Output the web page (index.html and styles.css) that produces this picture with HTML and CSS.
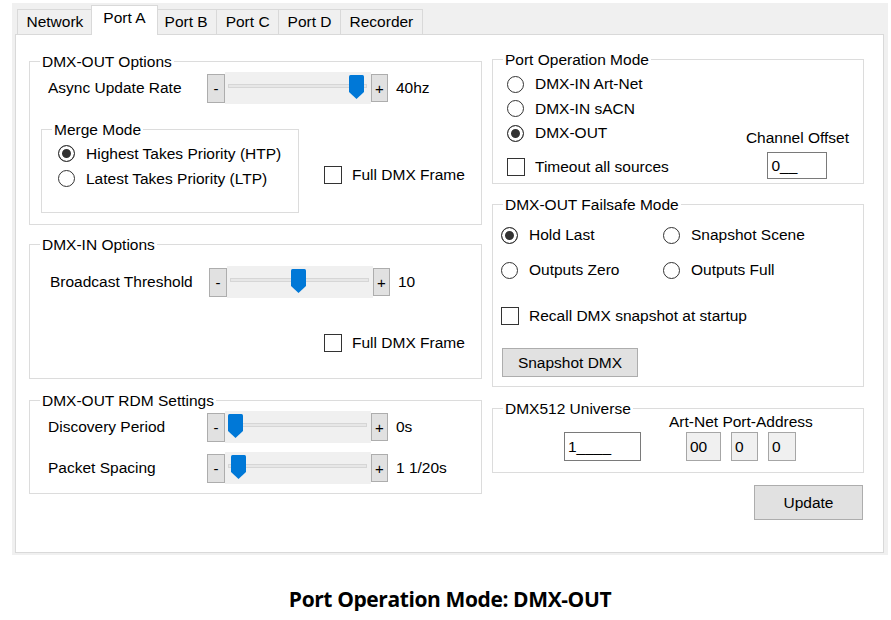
FILE: index.html
```html
<!DOCTYPE html>
<html>
<head>
<meta charset="utf-8">
<title>Port A</title>
<link rel="stylesheet" href="styles.css">
</head>
<body>
<div class="window">
  <div class="tabs">
    <div class="tab">Network</div>
    <div class="tab active">Port A</div>
    <div class="tab">Port B</div>
    <div class="tab">Port C</div>
    <div class="tab">Port D</div>
    <div class="tab">Recorder</div>
  </div>
  <div class="page">
    <div class="col col-left">
      <fieldset class="group g-out">
        <legend>DMX-OUT Options</legend>
        <div class="srow r-async">
          <span class="slabel">Async Update Rate</span>
          <div class="slider">
            <span class="sbtn minus">-</span>
            <div class="track"><div class="groove"></div><svg class="thumb" style="left:124px" viewBox="0 0 15 24" width="15" height="24"><path d="M1.5 0H13.5Q15 0 15 1.5V17L7.5 24L0 17V1.5Q0 0 1.5 0Z"/></svg></div>
            <span class="sbtn plus">+</span>
          </div>
          <span class="sval">40hz</span>
        </div>
        <div class="merge-row">
          <fieldset class="group g-merge">
            <legend>Merge Mode</legend>
            <div class="merge-list">
              <label class="opt"><span class="radio on"></span>Highest Takes Priority (HTP)</label>
              <label class="opt"><span class="radio"></span>Latest Takes Priority (LTP)</label>
            </div>
          </fieldset>
          <label class="opt chk-row full-out"><span class="check"></span>Full DMX Frame</label>
        </div>
      </fieldset>

      <fieldset class="group g-in">
        <legend>DMX-IN Options</legend>
        <div class="srow r-bcast">
          <span class="slabel">Broadcast Threshold</span>
          <div class="slider">
            <span class="sbtn minus">-</span>
            <div class="track"><div class="groove"></div><svg class="thumb" style="left:64px" viewBox="0 0 15 24" width="15" height="24"><path d="M1.5 0H13.5Q15 0 15 1.5V17L7.5 24L0 17V1.5Q0 0 1.5 0Z"/></svg></div>
            <span class="sbtn plus">+</span>
          </div>
          <span class="sval">10</span>
        </div>
        <label class="opt chk-row full-in"><span class="check"></span>Full DMX Frame</label>
      </fieldset>

      <fieldset class="group g-rdm">
        <legend>DMX-OUT RDM Settings</legend>
        <div class="srow r-disc">
          <span class="slabel">Discovery Period</span>
          <div class="slider">
            <span class="sbtn minus">-</span>
            <div class="track"><div class="groove"></div><svg class="thumb" style="left:3px" viewBox="0 0 15 24" width="15" height="24"><path d="M1.5 0H13.5Q15 0 15 1.5V17L7.5 24L0 17V1.5Q0 0 1.5 0Z"/></svg></div>
            <span class="sbtn plus">+</span>
          </div>
          <span class="sval">0s</span>
        </div>
        <div class="srow r-pack">
          <span class="slabel">Packet Spacing</span>
          <div class="slider">
            <span class="sbtn minus">-</span>
            <div class="track"><div class="groove"></div><svg class="thumb" style="left:6px" viewBox="0 0 15 24" width="15" height="24"><path d="M1.5 0H13.5Q15 0 15 1.5V17L7.5 24L0 17V1.5Q0 0 1.5 0Z"/></svg></div>
            <span class="sbtn plus">+</span>
          </div>
          <span class="sval">1 1/20s</span>
        </div>
      </fieldset>
    </div>

    <div class="col col-right">
      <fieldset class="group g-mode">
        <legend>Port Operation Mode</legend>
        <div class="mode">
          <div class="mode-list">
            <label class="opt"><span class="radio"></span>DMX-IN Art-Net</label>
            <label class="opt"><span class="radio"></span>DMX-IN sACN</label>
            <label class="opt"><span class="radio on"></span>DMX-OUT</label>
            <label class="opt chk-row timeout"><span class="check"></span>Timeout all sources</label>
          </div>
          <div class="offset">
            <span class="offset-label">Channel Offset</span>
            <span class="tb tb-offset">0__</span>
          </div>
        </div>
      </fieldset>

      <fieldset class="group g-fail">
        <legend>DMX-OUT Failsafe Mode</legend>
        <div class="fail-grid">
          <label class="opt"><span class="radio on"></span>Hold Last</label>
          <label class="opt"><span class="radio"></span>Snapshot Scene</label>
          <label class="opt"><span class="radio"></span>Outputs Zero</label>
          <label class="opt"><span class="radio"></span>Outputs Full</label>
        </div>
        <label class="opt chk-row recall"><span class="check"></span>Recall DMX snapshot at startup</label>
        <div class="btn snap">Snapshot DMX</div>
      </fieldset>

      <fieldset class="group g-uni">
        <legend>DMX512 Universe</legend>
        <div class="uni">
          <span class="tb tb-uni">1____</span>
          <div class="addr">
            <span class="addr-label">Art-Net Port-Address</span>
            <div class="addr-fields">
              <span class="tb dis w35">00</span>
              <span class="tb dis w27">0</span>
              <span class="tb dis w28">0</span>
            </div>
          </div>
        </div>
      </fieldset>

      <div class="btn update">Update</div>
    </div>
  </div>
</div>
<div class="caption">Port Operation Mode: DMX-OUT</div>
</body>
</html>
```

FILE: styles.css
```css
* { box-sizing: border-box; }

body {
  margin: 0;
  background: #ffffff;
  font-family: "Liberation Sans", Arial, sans-serif;
  font-size: 15.5px;
  color: #000;
}

.window {
  margin: 3px 0 0 12px;
  width: 876px;
  height: 552px;
  background: #f0f0f0;
  padding: 2px 0 0 3px;
}

/* tabs */
.tabs {
  display: flex;
  align-items: flex-start;
  height: 30px;
  padding-left: 2px;
  position: relative;
  z-index: 1;
}
.tab {
  height: 25px;
  margin-top: 4px;
  margin-left: -1px;
  padding: 0 8.5px;
  border: 1px solid #d9d9d9;
  border-bottom: none;
  background: #f0f0f0;
  line-height: 23px;
  white-space: nowrap;
}
.tab:first-child { margin-left: 0; }
.tab.active {
  height: 30px;
  margin-top: 0;
  margin-left: -2px;
  margin-right: -2px;
  padding: 1px 11.5px 0;
  background: #fff;
  line-height: 21px;
  position: relative;
  z-index: 2;
}

/* page */
.page {
  margin-top: -1px;
  width: 869px;
  height: 519px;
  background: #fff;
  border: 1px solid #d9d9d9;
  padding-left: 13px;
  display: flex;
  gap: 10px;
}
.col { display: flex; flex-direction: column; }
.col-left { width: 453px; margin-top: 18px; }
.col-right { width: 372px; margin-top: 16px; }

/* group boxes */
.group {
  margin: 0;
  padding: 0;
  border: 1px solid #dcdcdc;
  min-width: 0;
}
.group > legend {
  margin-left: 10px;
  padding: 0 2px;
  line-height: 17px;
  font-size: 15.5px;
}
.g-out { height: 172px; }
.g-in { height: 143px; margin-top: 11px; }
.g-rdm { height: 102px; margin-top: 13px; }
.g-merge { width: 258px; height: 92px; }
.g-mode { height: 133px; }
.g-fail { height: 191px; margin-top: 12px; }
.g-uni { height: 73px; margin-top: 13px; }

/* options */
.opt {
  display: flex;
  align-items: center;
  height: 25px;
  white-space: nowrap;
}
.chk-row { height: 20px; }
.radio {
  flex: none;
  width: 17px;
  height: 17px;
  margin-right: 11px;
  border: 1px solid #333;
  border-radius: 50%;
  background: #fff;
}
.radio.on {
  background: #333;
  box-shadow: inset 0 0 0 3px #fff;
}
.check {
  flex: none;
  width: 18px;
  height: 18px;
  margin-right: 10px;
  border: 1px solid #333;
  background: #fff;
}

/* sliders */
.srow {
  display: flex;
  align-items: center;
  height: 32px;
  padding-left: 18px;
  white-space: nowrap;
}
.slabel { width: 159px; }
.r-async { margin-top: 2px; }
.r-bcast { margin-top: 13px; padding-left: 20px; }
.r-disc { margin-top: 2px; }
.r-pack { margin-top: 9px; }
.slider { display: flex; align-items: center; }
.sbtn {
  display: flex;
  align-items: center;
  justify-content: center;
  background: #e1e1e1;
  border: 1px solid #adadad;
  font-size: 15px;
  line-height: 1;
}
.sbtn.minus { width: 18px; height: 29px; }
.sbtn.plus { width: 17px; height: 28px; }
.track {
  position: relative;
  width: 146px;
  height: 32px;
  background: #f0f0f0;
}
.groove {
  margin: 12px 4px 0 3px;
  height: 4px;
  border: 1px solid #d6d6d6;
  background: #e7e7e7;
}
.thumb {
  position: absolute;
  top: 3px;
  display: block;
  fill: #0078d7;
}
.sval { margin-left: 8px; }

/* merge */
.merge-row { display: flex; align-items: flex-start; margin: 17px 0 0 11px; }
.merge-list { margin-top: 3px; padding-left: 16px; }
.full-out { margin: 44px 0 0 25px; }
.full-in { margin: 35px 0 0 294px; }

/* port operation mode */
.mode { display: flex; justify-content: space-between; padding: 4px 14px 0; }
.mode-list .opt { height: 24.5px; }
.mode-list .timeout { height: 20px; margin-top: 11px; }
.offset {
  display: flex;
  flex-direction: column;
  align-items: center;
  margin-top: 57px;
}
.offset-label { line-height: 18px; }

/* text boxes */
.tb {
  display: block;
  height: 29px;
  line-height: 27px;
  padding-left: 3px;
  border: 1px solid #7a7a7a;
  background: #fff;
  white-space: nowrap;
}
.tb-offset { width: 60px; height: 27px; line-height: 25px; margin-top: 5px; }
.tb-uni { width: 77px; }
.tb.dis { background: #f0f0f0; border-color: #a6a6a6; }
.w35 { width: 35px; }
.w27 { width: 27px; }
.w28 { width: 28px; }

/* failsafe */
.fail-grid {
  display: grid;
  grid-template-columns: 162px auto;
  row-gap: 11px;
  margin-top: 10px;
  padding-left: 8px;
}
.fail-grid .opt { height: 24px; }
.recall { margin: 24px 0 0 8px; }

/* buttons */
.btn {
  display: flex;
  align-items: center;
  justify-content: center;
  background: #e1e1e1;
  border: 1px solid #adadad;
  white-space: nowrap;
}
.snap { width: 136px; height: 29px; margin: 22px 0 0 9px; }
.update { align-self: flex-end; width: 109px; height: 35px; margin: 12px 1px 0 0; }

/* universe */
.uni {
  display: flex;
  align-items: flex-end;
  padding-left: 71px;
  margin-top: -4px;
}
.addr {
  display: flex;
  flex-direction: column;
  align-items: center;
  margin-left: 28px;
}
.addr-label { line-height: 18px; }
.addr-fields { display: flex; gap: 10px; margin-top: 1px; }

/* caption */
.caption {
  margin-top: 32px;
  padding-left: 9px;
  text-align: center;
  font-family: "Open Sans", "Noto Sans", sans-serif;
  font-weight: 700;
  font-size: 21px;
  letter-spacing: -0.4px;
  line-height: 24px;
}
```
